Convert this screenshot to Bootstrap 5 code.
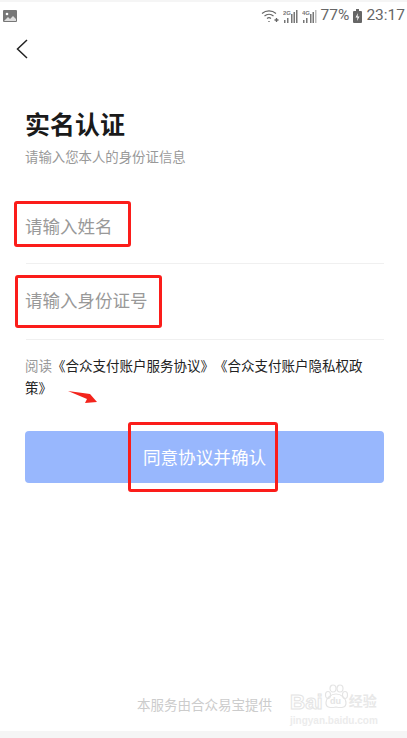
<!DOCTYPE html>
<html lang="zh">
<head>
    <meta charset="UTF-8">
    <meta name="viewport" content="width=device-width, initial-scale=1.0">
    <title>实名认证</title>
    <link href="https://cdn.jsdelivr.net/npm/bootstrap@5.3.0/dist/css/bootstrap.min.css" rel="stylesheet">
    <style>
        html, body { height: 100%; }
        body {
            font-family: "Noto Sans CJK SC", "Liberation Sans", sans-serif;
            background: #fff;
            overflow: hidden;
        }
        .screen { height: 738px; width: 407px; position: relative; border-top: 2px solid #f5f5f5; }
        .status-bar { height: 28px; padding: 0 2px 0 3px; color: #666; font-family: Roboto, sans-serif; font-size: 15.5px; }
        .back-row { height: 38px; padding-left: 16px; }
        .form-area { padding: 0 23px 0 26px; }
        .page-title { font-size: 25px; font-weight: 700; color: #1a1a1a; line-height: 36px; margin: 37px 0 0 -1px; }
        .page-sub { font-size: 13.4px; color: #999; line-height: 20px; margin: 5px 0 0 -1px; }
        .field-row { border-bottom: 1px solid #f0f0f0; font-size: 17.5px; color: #999; line-height: 26px; text-indent: -1px; }
        .field-name { height: 98px; padding-top: 47px; }
        .field-id { height: 76px; padding-top: 23px; }
        .agree-text { font-size: 13.5px; line-height: 22px; color: #222; margin: 14px 0 0 -1px; white-space: nowrap; text-spacing-trim: space-all; }
        .agree-lead { color: #999; }
        .confirm-btn {
            display: block; width: 359px; height: 52px; margin: 33px 0 0 -1px;
            background: #98b7fd; border: 0; border-radius: 4px;
            color: #fff; font-size: 17.6px;
        }
        .foot-note { font-size: 13.5px; color: #ccc; position: absolute; left: 137px; top: 692px; line-height: 20px; }
        .bottom-strip { position: absolute; left: 0; right: 0; bottom: 0; height: 7px; background: #f5f5f5; }
        .mark-box { position: absolute; border: 3px solid #fb1d1a; border-radius: 3px; }
        .mark-name { left: 14px; top: 199px; width: 117px; height: 46px; }
        .mark-id { left: 15px; top: 273px; width: 147px; height: 53px; }
        .mark-btn { left: 128px; top: 420px; width: 150px; height: 70px; }
        .mark-arrow { position: absolute; left: 67px; top: 386px; }
        .watermark { position: absolute; left: 290px; top: 682px; line-height: 1; }
        .wm-top { height: 26px; }
        .wm-bai { font-family: "Liberation Sans", sans-serif; font-size: 21px; font-weight: 700; color: #fff; -webkit-text-stroke: 1px #e4e4e4; margin-top: 8px; }
        .wm-cn { font-size: 14px; font-weight: 700; color: #e8e8e8; margin-top: 6px; }
        .wm-url { font-family: "Liberation Sans", sans-serif; font-size: 10px; font-weight: 700; color: #ececec; margin-top: 6px; }
    </style>
</head>
<body>
    <div class="screen">
        <!-- status bar -->
        <div class="status-bar d-flex align-items-center justify-content-between">
            <svg width="14" height="12" viewBox="0 0 14 12"><rect width="14" height="12" rx="1" fill="#777"/><circle cx="4" cy="4" r="1.3" fill="#fff"/><path d="M1 11l4-4 2 2 3-3 3 3v2z" fill="#ddd"/></svg>
            <div class="d-flex align-items-center gap-1">
                <svg width="18" height="14" viewBox="0 0 18 14" fill="none" stroke="#666" stroke-width="1.1"><path d="M1 4.500c4-3.500 10-3.500 14 0M3.500 7c2.600-2.200 6.400-2.200 9 0M6 9.500c1.200-1 2.800-1 4 0"/><path d="M13.500 11h4M15.500 9v4M8 12v1" stroke-width="1.300"/></svg>
                <svg width="15" height="14" viewBox="0 0 15 14" fill="#777"><rect x="8" y="5" width="1.500" height="9"/><rect x="10.500" y="3" width="1.500" height="11"/><rect x="13" y="1" width="1.500" height="13"/><rect x="1" y="11" width="1.500" height="3"/><rect x="4" y="9" width="1.500" height="5"/><text x="0" y="6" font-size="6" font-family="Liberation Sans" font-weight="700">2G</text></svg>
                <svg width="15" height="14" viewBox="0 0 15 14" fill="#777"><rect x="8" y="5" width="1.500" height="9"/><rect x="10.500" y="3" width="1.500" height="11"/><rect x="13" y="1" width="1.500" height="13" fill="#bbb"/><rect x="1" y="11" width="1.500" height="3"/><rect x="4" y="9" width="1.500" height="5"/><text x="0" y="6" font-size="6" font-family="Liberation Sans" font-weight="700">4G</text></svg>
                <span>77%</span>
                <svg width="9" height="14" viewBox="0 0 9 14"><rect y="2" width="9" height="12" rx="1" fill="#666"/><rect x="3" width="3" height="2" fill="#666"/><path d="M5 4L2.500 8.500H4.500L4 12 6.500 7.500H4.500z" fill="#fff"/></svg>
                <span>23:17</span>
            </div>
        </div>

        <!-- back -->
        <div class="back-row d-flex align-items-center">
            <svg width="12" height="20" viewBox="0 0 12 20" fill="none" stroke="#222" stroke-width="1.500"><path d="M11 1L1.500 10 11 19"/></svg>
        </div>

        <div class="form-area">
            <h1 class="page-title">实名认证</h1>
            <p class="page-sub">请输入您本人的身份证信息</p>
            <div class="field-row field-name">请输入姓名</div>
            <div class="field-row field-id">请输入身份证号</div>
            <div class="agree-text">
                <div class="d-flex"><span class="agree-lead">阅读</span><span>《合众支付账户服务协议》《合众支付账户隐私权政</span></div>
                <div>策》</div>
            </div>
            <button type="button" class="confirm-btn">同意协议并确认</button>
        </div>

        <div class="foot-note">本服务由合众易宝提供</div>

        <div class="watermark">
            <div class="wm-top d-flex align-items-center">
                <span class="wm-bai">Bai</span>
                <svg width="26" height="26" viewBox="0 0 26 26" fill="none" stroke="#e4e4e4" stroke-width="1.200"><ellipse cx="5" cy="11" rx="2.500" ry="3.500"/><ellipse cx="10" cy="4.500" rx="3" ry="3.500"/><ellipse cx="17" cy="4.500" rx="3" ry="3.500"/><ellipse cx="22" cy="11" rx="2.500" ry="3.500"/><path d="M13 10c-5 0-10 4-10 9 0 5 5 5 10 4 5 1 10 1 10-4 0-5-5-9-10-9z"/><text x="7" y="20" font-size="9" font-family="Liberation Sans" font-weight="700" fill="#e4e4e4" stroke="none">du</text></svg>
                <span class="wm-cn">经验</span>
            </div>
            <div class="wm-url">jingyan.baidu.com</div>
        </div>

        <div class="bottom-strip"></div>

        <!-- red annotations drawn over the screenshot -->
        <div class="mark-box mark-name"></div>
        <div class="mark-box mark-id"></div>
        <div class="mark-box mark-btn"></div>
        <svg class="mark-arrow" width="32" height="16" viewBox="0 0 32 16"><path d="M1 3L23 6 30 14 18 15 20 11z" fill="#f3241c"/></svg>
    </div>

    <script src="https://cdn.jsdelivr.net/npm/bootstrap@5.3.0/dist/js/bootstrap.bundle.min.js"></script>
</body>
</html>
